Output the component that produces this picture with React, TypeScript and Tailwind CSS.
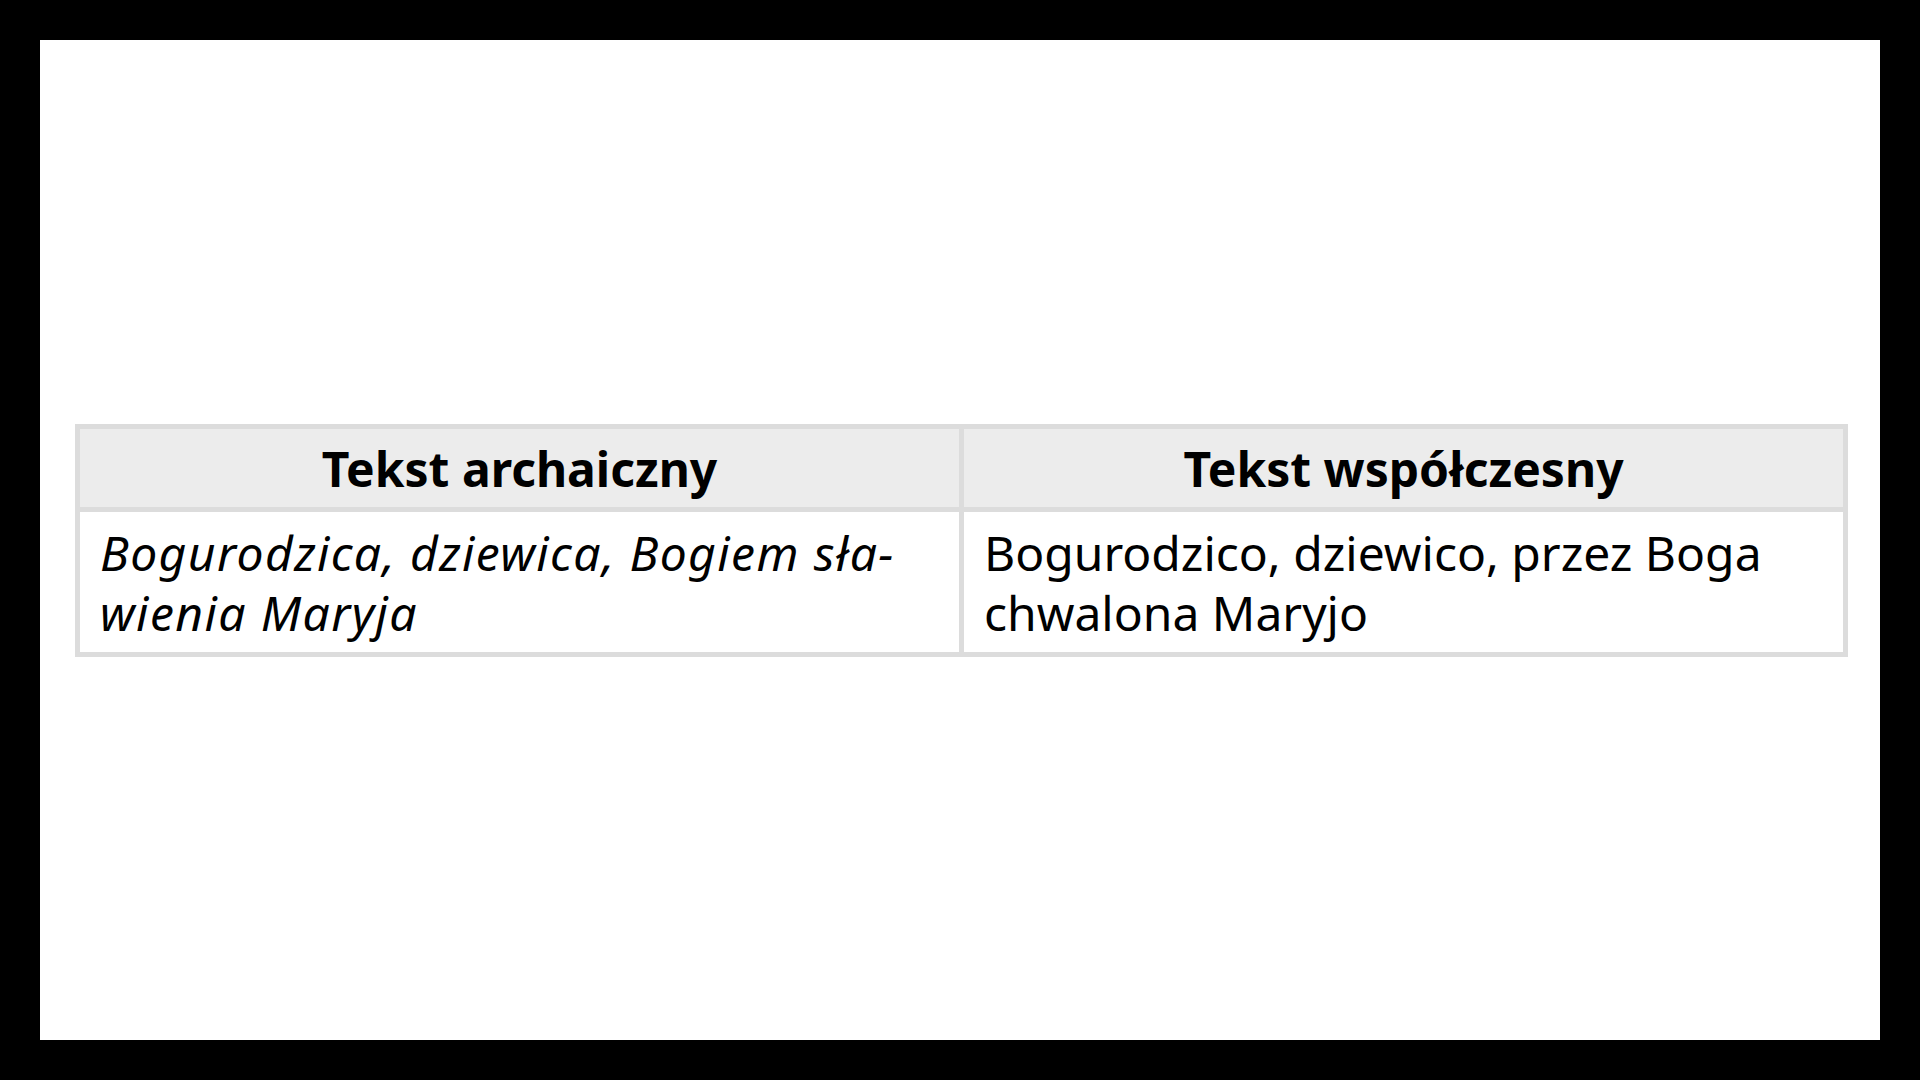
export default function App() {
  return (
    <div className="w-[1920px] h-[1080px] bg-black p-[40px]">
      <div className="w-full h-full bg-white flex items-center pl-[35px] pr-[32px]">
        <table
          className="w-full table-fixed border-collapse text-black text-[48px] leading-[60px]"
          style={{ fontFamily: '"Noto Sans", "Open Sans", sans-serif' }}
        >
          <thead>
            <tr className="bg-[#ececec]">
              <th className="border-[5px] border-[#dcdcdc] px-[20px] pt-[10px] pb-[8px] font-bold text-center">
                Tekst archaiczny
              </th>
              <th className="border-[5px] border-[#dcdcdc] px-[20px] pt-[10px] pb-[8px] font-bold text-center">
                Tekst współczesny
              </th>
            </tr>
          </thead>
          <tbody>
            <tr>
              <td className="border-[5px] border-[#dcdcdc] px-[20px] pt-[11px] pb-[9px] italic tracking-[1.4px] align-top">
                Bogurodzica, dziewica, Bogiem sła-
                <br />
                wienia Maryja
              </td>
              <td className="border-[5px] border-[#dcdcdc] px-[20px] pt-[11px] pb-[9px] align-top">
                Bogurodzico, dziewico, przez Boga
                <br />
                chwalona Maryjo
              </td>
            </tr>
          </tbody>
        </table>
      </div>
    </div>
  )
}
